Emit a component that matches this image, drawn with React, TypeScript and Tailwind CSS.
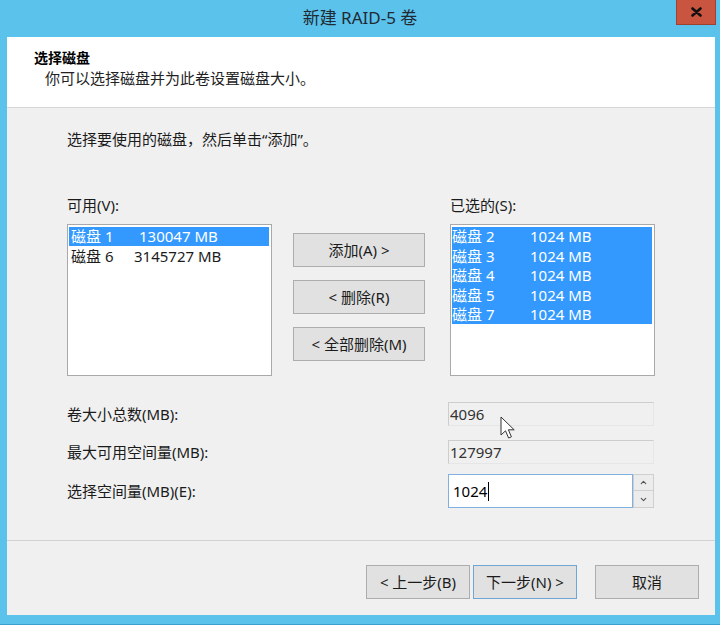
import { ChevronUp, ChevronDown } from 'lucide-react'

const available = [
  { name: '磁盘 1', size: '130047 MB', col: 'w-[68px]', selected: true },
  { name: '磁盘 6', size: '3145727 MB', col: 'w-[63px]', selected: false },
]

const chosen = ['磁盘 2', '磁盘 3', '磁盘 4', '磁盘 5', '磁盘 7'].map((name) => ({
  name,
  size: '1024 MB',
  col: 'w-[78px]',
  selected: true,
}))

type Disk = { name: string; size: string; col: string; selected: boolean }

function DiskList({ items, tight }: { items: Disk[]; tight?: boolean }) {
  return (
    <div className="w-[205px] h-[152px] bg-white border border-[#a9a9a9] pt-[2px] px-[1px]">
      {items.map((d) => (
        <div
          key={d.name}
          className={
            (d.selected
              ? 'flex items-center h-[19.4px] mr-[1px] bg-[#3399ff] text-white '
              : 'flex items-center h-[19.4px] mr-[1px] text-[#1b1b1b] ') + (tight ? 'pl-0' : 'pl-[2px]')
          }
        >
          <span className={d.col}>{d.name}</span>
          <span>{d.size}</span>
        </div>
      ))}
    </div>
  )
}

function WinButton({ children, primary }: { children: React.ReactNode; primary?: boolean }) {
  return (
    <button
      className={
        primary
          ? 'w-[104px] h-[34px] bg-[#e1e1e1] border border-[#6fa6d6] text-[15px] text-[#1b1b1b]'
          : 'w-[104px] h-[34px] bg-[#e1e1e1] border border-[#adadad] text-[15px] text-[#1b1b1b]'
      }
    >
      {children}
    </button>
  )
}

function MoveButton({ children }: { children: React.ReactNode }) {
  return (
    <button className="w-[132px] h-[34px] bg-[#e1e1e1] border border-[#adadad] text-[15px] text-[#1b1b1b]">
      {children}
    </button>
  )
}

export default function App() {
  return (
    <div className="relative w-[720px] h-[625px] bg-[#5bc2ec] flex flex-col overflow-hidden border-b border-[#3c9fd0] font-['Segoe_UI','Noto_Sans','Noto_Sans_CJK_SC',sans-serif] text-[15px] text-[#1b1b1b]">
      {/* title bar */}
      <div className="relative h-[37px] shrink-0 flex items-center justify-center">
        <span className="text-[17px] text-[#1f2a33] -mt-[1px]">新建 RAID-5 卷</span>
        <div className="absolute right-[4px] top-0 w-[40px] h-[25px] bg-[#c9543f] border border-t-0 border-[#a1402f] flex items-center justify-center">
          <svg width="11" height="10" viewBox="0 0 11 10">
            <path d="M1.5 1.5 L9.5 8.5 M9.5 1.5 L1.5 8.5" stroke="#111" strokeWidth="2.6" strokeLinecap="round" />
          </svg>
        </div>
      </div>

      <div className="flex-1 flex flex-col ml-[7px] mr-[5px] mb-[9px] bg-[#f0f0f0]">
        {/* header */}
        <div className="h-[71px] shrink-0 bg-white border-b border-[#d6d6d6] pl-[27px] pt-[11px]">
          <div className="h-[20px] leading-[20px] font-bold text-[14px] text-black">选择磁盘</div>
          <div className="h-[20px] leading-[20px] pl-[11px] text-[#222]">你可以选择磁盘并为此卷设置磁盘大小。</div>
        </div>

        {/* body */}
        <div className="flex-1 pl-[60px] pt-[21px]">
          <div className="h-[20px] leading-[20px]">选择要使用的磁盘，然后单击“添加”。</div>

          <div className="flex mt-[46px]">
            <div className="flex flex-col">
              <div className="h-[20px] leading-[20px] mb-[9px]">可用(V):</div>
              <DiskList items={available} />
            </div>
            <div className="flex flex-col gap-[13px] ml-[21px] pt-[38px]">
              <MoveButton>添加(A) &gt;</MoveButton>
              <MoveButton>&lt; 删除(R)</MoveButton>
              <MoveButton>&lt; 全部删除(M)</MoveButton>
            </div>
            <div className="flex flex-col ml-[25px]">
              <div className="h-[20px] leading-[20px] mb-[9px]">已选的(S):</div>
              <DiskList items={chosen} tight />
            </div>
          </div>

          <div className="w-[587px] flex flex-col mt-[26px]">
            <div className="flex items-center justify-between h-[24px]">
              <span>卷大小总数(MB):</span>
              <div className="w-[206px] h-[24px] border-t border-l border-[#cdcdcd] border-r border-b border-r-[#e6e6e6] border-b-[#e6e6e6] pl-[1px] leading-[22px] text-[#333]">
                4096
              </div>
            </div>
            <div className="flex items-center justify-between h-[24px] mt-[14px]">
              <span>最大可用空间量(MB):</span>
              <div className="w-[206px] h-[24px] border-t border-l border-[#cdcdcd] border-r border-b border-r-[#e6e6e6] border-b-[#e6e6e6] pl-[1px] leading-[22px] text-[#333]">
                127997
              </div>
            </div>
            <div className="flex items-center justify-between h-[34px] mt-[10px]">
              <span>选择空间量(MB)(E):</span>
              <div className="flex">
                <div className="w-[185px] h-[34px] bg-white border border-[#7fb0e0] flex items-center pl-[4px] text-black">
                  1024
                  <span className="inline-block w-[1px] h-[19px] bg-black ml-[1px]" />
                </div>
                <div className="w-[21px] h-[34px] flex flex-col">
                  <div className="h-[17px] bg-[#ececec] border border-[#cfcfcf] flex items-center justify-center">
                    <ChevronUp size={9} strokeWidth={3} className="text-[#555]" />
                  </div>
                  <div className="h-[17px] bg-[#ececec] border border-t-0 border-[#cfcfcf] flex items-center justify-center">
                    <ChevronDown size={9} strokeWidth={3} className="text-[#555]" />
                  </div>
                </div>
              </div>
            </div>
          </div>
        </div>

        {/* footer */}
        <div className="h-[75px] shrink-0 border-t border-[#d2d2d2] flex justify-end items-start pt-[24px] pr-[16px]">
          <div className="flex gap-[3px]">
            <WinButton>&lt; 上一步(B)</WinButton>
            <WinButton primary>下一步(N) &gt;</WinButton>
          </div>
          <div className="ml-[18px]">
            <WinButton>取消</WinButton>
          </div>
        </div>
      </div>

      {/* mouse pointer */}
      <svg className="absolute left-[500px] top-[416px]" width="16" height="26" viewBox="0 0 16 26">
        <path
          d="M1 1 L1 19 L5.5 14.8 L8.6 22 L11.4 20.8 L8.4 13.8 L14.2 13.8 Z"
          fill="#fff"
          stroke="#333"
          strokeWidth="1"
          strokeLinejoin="round"
        />
      </svg>
    </div>
  )
}
